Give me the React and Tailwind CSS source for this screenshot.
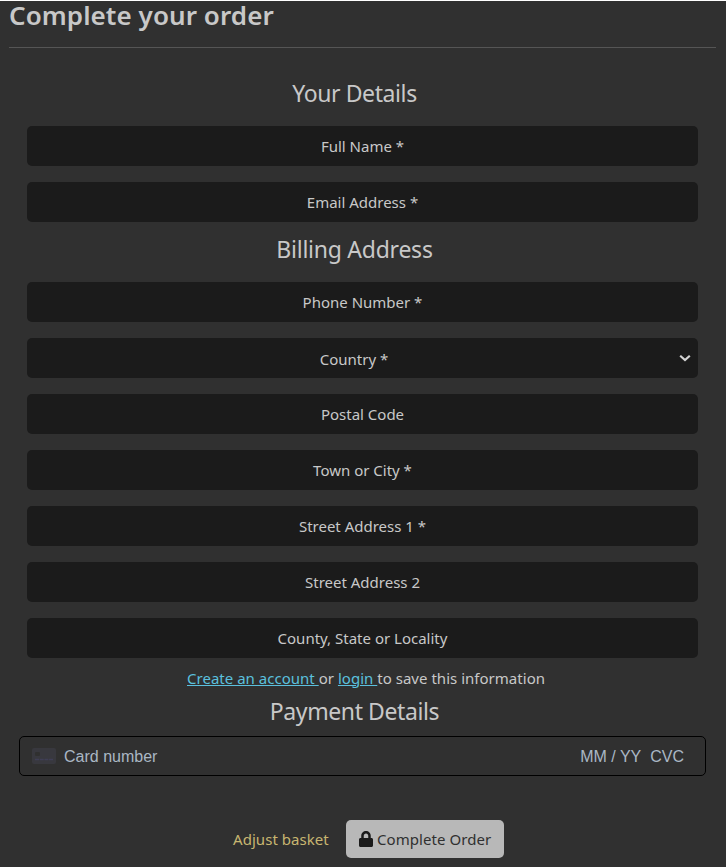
const ui = "font-['Noto_Sans','Open_Sans',sans-serif]";

function SectionTitle({ children, className }) {
  return (
    <h2 className={`flex h-8 items-center justify-center whitespace-nowrap pb-[2px] pr-4 text-[23px] text-[#c8c8c8] ${className}`}>
      {children}
    </h2>
  );
}

function Field({ label, select }) {
  return (
    <div className="flex h-10 items-center rounded-[5px] bg-[#1b1b1b] px-[7px] text-[15px] text-[#c8c8c8]">
      <span className={select ? "w-0" : "w-3"} />
      <span className={`flex-1 whitespace-nowrap text-center ${select ? "pr-[5px] pt-[2px]" : ""}`}>{label}</span>
      <span className="w-3">
        {select && (
          <svg width="12" height="8" viewBox="0 0 12 8" fill="none" stroke="#d4d4d4" strokeWidth="2.200">
            <path d="M1.200 1.700 6 6l4.800-4.300" />
          </svg>
        )}
      </span>
    </div>
  );
}

const billing = [
  "Phone Number *",
  "Country *",
  "Postal Code",
  "Town or City *",
  "Street Address 1 *",
  "Street Address 2",
  "County, State or Locality",
];

export default function App() {
  return (
    <main className={`h-[867px] w-[726px] border-t border-white bg-[#303030] ${ui}`}>
      <header className="ml-[9px] mr-[10px] flex h-[47px] items-start border-b border-[#555]">
        <h1 className="whitespace-nowrap text-[26px] leading-[28px] font-semibold tracking-[0.07px] text-[#c8c8c8]">Complete your order</h1>
      </header>
      <form className="ml-[27px] mr-7 flex flex-col pt-[30px]">
        <SectionTitle className="tracking-[-0.4px]">Your Details</SectionTitle>
        <div className="mt-4 flex flex-col gap-4">
          <Field label="Full Name *" />
          <Field label="Email Address *" />
        </div>
        <SectionTitle className="mt-3 tracking-[-0.25px]">Billing Address</SectionTitle>
        <div className="mt-4 flex flex-col gap-4">
          {billing.map((label) => (
            <Field key={label} label={label} select={label === "Country *"} />
          ))}
        </div>
        <p className="mt-2 flex h-6 items-center justify-center whitespace-pre pl-[7px] text-[15px] tracking-[0.02px] text-[#c8c8c8]">
          <a className="text-[#5bc0de] underline">Create an account </a>or <a className="text-[#5bc0de] underline">login </a>to save this information
        </p>
        <SectionTitle className="mt-[6px] tracking-[-0.4px]">Payment Details</SectionTitle>
      </form>
      <div className="ml-[19px] mr-5 mt-2 flex h-10 items-center rounded-[5px] border border-black pl-3 pr-[21px] font-['Liberation_Sans',Arial,sans-serif] text-[16px] text-[#aab7c4]">
        <svg width="24" height="16" viewBox="0 0 24 16">
          <rect width="24" height="16" rx="2" fill="#38383e" />
          <rect x="3" y="4" width="5" height="4" rx="1" fill="#303030" />
          <path d="M3 11.500h18" stroke="#3f3e55" strokeWidth="1.500" strokeDasharray="4 .7" />
        </svg>
        <span className="ml-2 flex-1 pt-[2px]">Card number</span>
        <span className="pt-[2px]">MM / YY</span>
        <span className="ml-[9px] pt-[2px]">CVC</span>
      </div>
      <div className="mt-11 flex h-[38px] items-center pl-[233px] text-[15px]">
        <a className="w-[113px] whitespace-nowrap tracking-[0.05px] text-[#c8b670]">Adjust basket</a>
        <button className="flex h-[38px] w-[158px] items-center whitespace-nowrap rounded-[5px] bg-[#b8b8b8] pl-[13px] text-[#303030]">
          <svg width="14" height="16" viewBox="0 0 448 512" fill="#1b1b1b">
            <path d="M400 224h-24v-72C376 68.200 307.800 0 224 0S72 68.200 72 152v72H48c-26.500 0-48 21.500-48 48v192c0 26.500 21.500 48 48 48h352c26.500 0 48-21.500 48-48V272c0-26.500-21.500-48-48-48zm-104 0H152v-72c0-39.700 32.300-72 72-72s72 32.300 72 72v72z" />
          </svg>
          <span className="ml-1 tracking-[0.07px]">Complete Order</span>
        </button>
      </div>
    </main>
  );
}
